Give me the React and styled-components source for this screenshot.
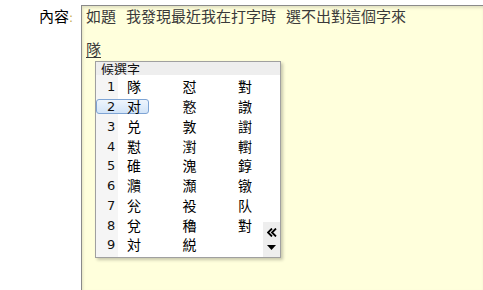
import React from "react";
import styled, { createGlobalStyle } from "styled-components";

const Global = createGlobalStyle`
  html, body { margin: 0; padding: 0; background: #fff; overflow: hidden; }
  body { font-family: "Noto Sans CJK TC", "DejaVu Sans", sans-serif; }
`;

const Page = styled.div`
  display: flex;
  height: 290px;
  width: 483px;
`;

const Label = styled.div`
  width: 81px;
  box-sizing: border-box;
  padding: 7px 8px 0 0;
  text-align: right;
  font-size: 15px;
  line-height: 18px;
  color: #000;
  font-family: "Noto Sans CJK TC", sans-serif;
`;

const Colon = styled.span`
  color: #c4a850;
  font-family: "DejaVu Sans", sans-serif;
  font-size: 12px;
`;

const Editor = styled.div`
  position: relative;
  flex: 1;
  margin-top: 5px;
  background: #ffffdc;
  border-top: 1px solid #8a8a8a;
  border-left: 1px solid #8a8a8a;
  box-shadow: inset 1px 2px 3px rgba(0, 0, 0, 0.12);
  padding: 2px 0 0 4px;
  font-size: 15px;
  color: #3a3a3a;
  font-family: "Noto Sans CJK TC", sans-serif;
`;

const Line = styled.div`
  height: 16.5px;
  line-height: 16.5px;
  white-space: nowrap;
`;

const Gap = styled.span`
  display: inline-block;
  width: 10px;
`;

const Composing = styled.span`
  text-decoration: underline;
  text-underline-offset: 2px;
`;

const Popup = styled.div`
  position: absolute;
  left: 13px;
  top: 55px;
  width: 186px;
  height: 197px;
  box-sizing: border-box;
  background: #fff;
  border: 1px solid #a0a0a0;
  box-shadow: 2px 2px 3px rgba(0, 0, 0, 0.22);
  display: flex;
  flex-direction: column;
  color: #000;
`;

const Header = styled.div`
  height: 13px;
  background: #eeeeee;
  font-size: 13px;
  line-height: 13px;
  padding-left: 5px;
  font-family: "Noto Sans CJK TC", sans-serif;
  color: #111;
`;

const List = styled.div`
  flex: 1;
  display: flex;
  flex-direction: column;
  padding-top: 2px;
  background: linear-gradient(to right, #f5f5f5 0, #f5f5f5 22px, #fff 22px);
`;

const Row = styled.div`
  position: relative;
  display: grid;
  grid-template-columns: 22px 55.5px 55.5px 1fr;
  height: 19.75px;
  align-items: center;
`;

const Highlight = styled.span`
  position: absolute;
  left: 0;
  top: 2px;
  width: 53px;
  height: 15px;
  box-sizing: border-box;
  border: 1px solid #7ea4d4;
  border-radius: 3px;
  background: linear-gradient(to bottom, #eef5fd, #d2e4f8);
`;

const Num = styled.span`
  position: relative;
  font-family: "DejaVu Sans", sans-serif;
  font-size: 13px;
  padding-left: 11px;
  color: #111;
`;

const Cand = styled.span`
  position: relative;
  font-size: 14px;
  line-height: 19px;
  padding-left: 9px;
  font-family: "Noto Sans CJK TC", sans-serif;
`;

const Scroller = styled.div`
  position: absolute;
  right: 0;
  bottom: 0;
  width: 17px;
  height: 35px;
  background: #eeeeee;
  display: flex;
  flex-direction: column;
  align-items: center;
  padding-top: 6px;
  box-sizing: border-box;
  gap: 8px;
`;

const data = [
  ["隊", "怼", "對"],
  ["对", "憝", "譈"],
  ["兑", "敦", "譵"],
  ["懟", "濧", "轛"],
  ["碓", "溾", "錞"],
  ["濻", "瀩", "镦"],
  ["兊", "祋", "队"],
  ["兌", "穭", "對"],
  ["対", "綐", ""],
];

export default function App() {
  return (
    <>
      <Global />
      <Page>
        <Label>
          內容<Colon>:</Colon>
        </Label>
        <Editor>
          <Line>
            如題<Gap />我發現最近我在打字時<Gap />選不出對這個字來
          </Line>
          <Line />
          <Line>
            <Composing>隊</Composing>
          </Line>
          <Popup>
            <Header>候選字</Header>
            <List>
              {data.map((r, i) => (
                <Row key={i}>
                  {i === 1 && <Highlight />}
                  <Num>{i + 1}</Num>
                  <Cand>{r[0]}</Cand>
                  <Cand>{r[1]}</Cand>
                  <Cand>{r[2]}</Cand>
                </Row>
              ))}
            </List>
            <Scroller>
              <svg width="10" height="9" viewBox="0 0 10 9">
                <path d="M5 0.5 L1 4.5 L5 8.5 M9 0.5 L5 4.5 L9 8.5" stroke="#000" strokeWidth="1.8" fill="none" />
              </svg>
              <svg width="9" height="5" viewBox="0 0 9 5">
                <path d="M0 0 H9 L4.5 5 Z" fill="#000" />
              </svg>
            </Scroller>
          </Popup>
        </Editor>
      </Page>
    </>
  );
}
